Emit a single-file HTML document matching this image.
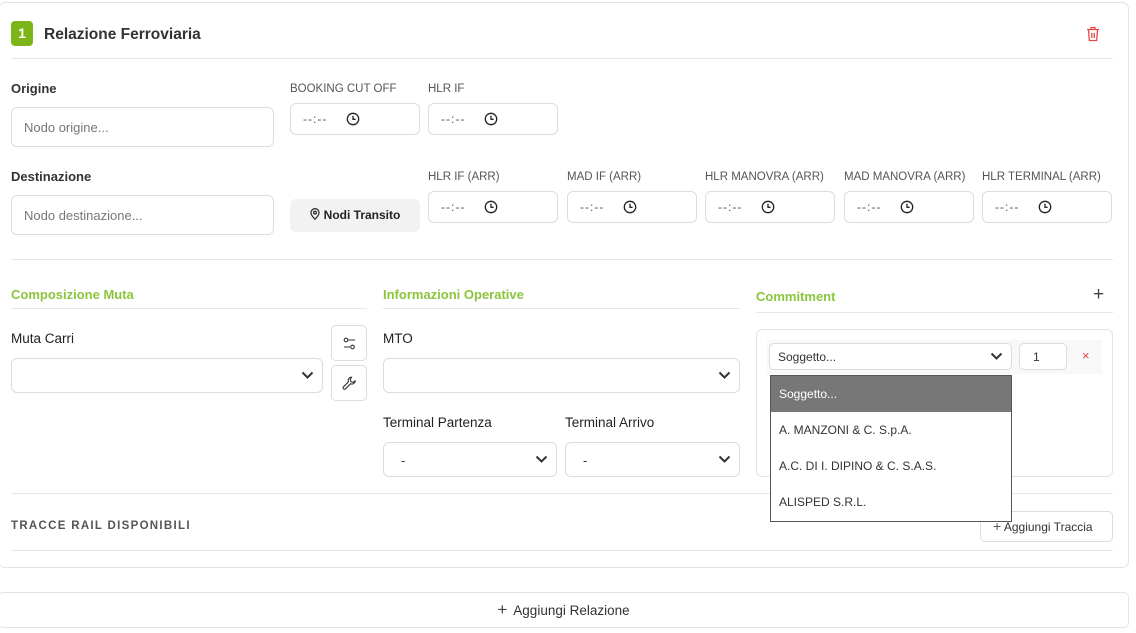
<!DOCTYPE html>
<html><head><meta charset="utf-8"><style>
*{box-sizing:border-box;margin:0;padding:0}
body{width:1136px;height:633px;background:#fff;font-family:"Liberation Sans",sans-serif;color:#333;position:relative;overflow:hidden}
.a{position:absolute}
.card{left:-2px;top:2px;width:1131px;height:566px;border:1px solid #e3e3e3;border-radius:7px}
.hr{position:absolute;height:1px;background:#e6e6e6}
.lbl{position:absolute;font-size:13px;font-weight:bold;color:#333;line-height:16px}
.sl{position:absolute;font-size:11.5px;color:#555;line-height:14px}
.inp{position:absolute;border:1px solid #dcdcdc;border-radius:6px;background:#fff}
.ph{position:absolute;left:12px;font-size:13px;color:#777}
.time .t{position:absolute;left:12px;top:8px;font-size:12px;color:#555;letter-spacing:1px}
.time svg{position:absolute;left:55px;top:8px}
.green{position:absolute;font-size:13px;font-weight:bold;color:#8cc43c;line-height:16px}
.chev{position:absolute;right:8px;top:50%;margin-top:-5px}
.ib{position:absolute;border:1px solid #dcdcdc;border-radius:5px;background:#fff}
</style></head><body>
<div class="a card"></div>
<div class="a" style="left:11px;top:21px;width:22px;height:25px;background:#7cb518;border-radius:4px;color:#fff;font-weight:bold;font-size:14px;text-align:center;line-height:25px">1</div>
<div class="a" style="left:44px;top:26px;font-size:15.5px;font-weight:bold;color:#333">Relazione Ferroviaria</div>
<svg class="a" style="left:1086px;top:26px" width="14" height="16" viewBox="0 0 14 16" fill="none" stroke="#e04848" stroke-width="1.3"><path d="M1 3.5h12M5 3.5V1.5h4v2M2.5 3.5l.8 11h7.4l.8-11M5.8 7v5M8.2 7v5"/></svg>
<div class="hr" style="left:11px;top:58px;width:1102px"></div>

<div class="lbl" style="left:11px;top:81px">Origine</div>
<div class="inp" style="left:11px;top:107px;width:263px;height:40px"><span class="ph" style="top:12px">Nodo origine...</span></div>
<div class="sl" style="left:290px;top:82px">BOOKING CUT OFF</div>
<div class="sl" style="left:428px;top:82px">HLR IF</div>

<div class="lbl" style="left:11px;top:169px">Destinazione</div>
<div class="inp" style="left:11px;top:195px;width:263px;height:40px"><span class="ph" style="top:12px">Nodo destinazione...</span></div>
<div class="a" style="left:290px;top:199px;width:130px;height:33px;background:#f2f2f2;border-radius:6px;font-size:12px;font-weight:bold;color:#222;text-align:center;line-height:33px"><svg width="10" height="12" viewBox="0 0 10 12" style="vertical-align:-1px;margin-right:4px" fill="none" stroke="#222" stroke-width="1.2"><path d="M5 11.2S1 7.2 1 4.6a4 4 0 0 1 8 0C9 7.2 5 11.2 5 11.2z"/><circle cx="5" cy="4.6" r="1.4"/></svg>Nodi Transito</div>

<div class="sl" style="left:428px;top:170px">HLR IF (ARR)</div>
<div class="sl" style="left:567px;top:170px">MAD IF (ARR)</div>
<div class="sl" style="left:705px;top:170px">HLR MANOVRA (ARR)</div>
<div class="sl" style="left:844px;top:170px">MAD MANOVRA (ARR)</div>
<div class="sl" style="left:982px;top:170px">HLR TERMINAL (ARR)</div>

<div id="times"></div>

<div class="hr" style="left:11px;top:259px;width:1102px"></div>

<div class="green" style="left:11px;top:287px">Composizione Muta</div>
<div class="hr" style="left:11px;top:308px;width:356px"></div>
<div class="green" style="left:383px;top:287px">Informazioni Operative</div>
<div class="hr" style="left:383px;top:308px;width:356px"></div>
<div class="green" style="left:756px;top:289px">Commitment</div>
<div class="a" style="left:1093px;top:284px;font-size:19px;color:#444">+</div>
<div class="hr" style="left:756px;top:312px;width:357px"></div>

<div class="lbl" style="left:11px;top:331px;font-weight:normal;font-size:13.5px;color:#222">Muta Carri</div>
<div class="inp" style="left:11px;top:358px;width:312px;height:35px"><svg class="chev" width="13" height="9" viewBox="0 0 13 9" fill="none" stroke="#333" stroke-width="2"><path d="M1.5 1.5l5 5 5-5"/></svg></div>
<div class="ib" style="left:331px;top:325px;width:36px;height:36px"><svg style="position:absolute;left:11px;top:11px" width="13" height="13" viewBox="0 0 13 13" fill="none" stroke="#333" stroke-width="1.1"><circle cx="3" cy="3" r="1.8"/><path d="M5 3h7M1 10h6"/><circle cx="9.5" cy="10" r="1.8"/></svg></div>
<div class="ib" style="left:331px;top:365px;width:36px;height:36px"><svg style="position:absolute;left:10px;top:10px" width="15" height="15" viewBox="0 0 15 15" fill="none" stroke="#333" stroke-width="1.1"><path d="M9.5 1.2a3.3 3.3 0 0 0-3 4.6L1.5 10.8a1.4 1.4 0 0 0 2 2l5-5a3.3 3.3 0 0 0 4.6-3l-2 1.5-2.2-.6-.6-2.2z"/></svg></div>

<div class="lbl" style="left:383px;top:331px;font-weight:normal;font-size:13.5px;color:#222">MTO</div>
<div class="inp" style="left:383px;top:358px;width:357px;height:35px"><svg class="chev" width="13" height="9" viewBox="0 0 13 9" fill="none" stroke="#333" stroke-width="2"><path d="M1.5 1.5l5 5 5-5"/></svg></div>
<div class="lbl" style="left:383px;top:415px;font-weight:normal;font-size:13.5px;color:#222">Terminal Partenza</div>
<div class="inp" style="left:383px;top:442px;width:174px;height:35px"><span class="ph" style="left:17px;top:10px;color:#333">-</span><svg class="chev" width="13" height="9" viewBox="0 0 13 9" fill="none" stroke="#333" stroke-width="2"><path d="M1.5 1.5l5 5 5-5"/></svg></div>
<div class="lbl" style="left:565px;top:415px;font-weight:normal;font-size:13.5px;color:#222">Terminal Arrivo</div>
<div class="inp" style="left:565px;top:442px;width:175px;height:35px"><span class="ph" style="left:17px;top:10px;color:#333">-</span><svg class="chev" width="13" height="9" viewBox="0 0 13 9" fill="none" stroke="#333" stroke-width="2"><path d="M1.5 1.5l5 5 5-5"/></svg></div>

<div class="inp" style="left:756px;top:329px;width:357px;height:148px;border-color:#e3e3e3"></div>
<div class="a" style="left:767px;top:340px;width:335px;height:34px;background:#f8f8f8"></div>
<div class="inp" style="left:769px;top:343px;width:243px;height:27px;border-radius:5px"><span class="ph" style="left:8px;top:6px;font-size:12px;color:#333">Soggetto...</span><svg class="chev" width="13" height="9" viewBox="0 0 13 9" fill="none" stroke="#333" stroke-width="2"><path d="M1.5 1.5l5 5 5-5"/></svg></div>
<div class="inp" style="left:1019px;top:343px;width:48px;height:27px;border-radius:5px"><span class="ph" style="left:13px;top:6px;font-size:12px;color:#333">1</span></div>
<div class="a" style="left:1082px;top:348px;font-size:13px;color:#e04848">×</div>

<div class="hr" style="left:11px;top:493px;width:1102px"></div>
<div class="a" style="left:11px;top:520px;font-size:11.5px;font-weight:bold;color:#555;letter-spacing:1.3px">TRACCE RAIL DISPONIBILI</div>
<div class="inp" style="left:980px;top:511px;width:133px;height:31px;border-radius:5px;font-size:12px;color:#333;line-height:29px;padding-left:12px"><span style="font-size:14px;color:#555">+</span> Aggiungi Traccia</div>
<div class="hr" style="left:11px;top:550px;width:1102px"></div>

<div class="a" style="left:770px;top:375px;width:242px;height:147px;border:1px solid #555;background:#fff;font-size:12px;color:#333">
<div style="height:36px;background:#777;color:#fff;line-height:37px;padding-left:8px">Soggetto...</div>
<div style="height:36px;line-height:37px;padding-left:8px">A. MANZONI &amp; C. S.p.A.</div>
<div style="height:36px;line-height:37px;padding-left:8px">A.C. DI I. DIPINO &amp; C. S.A.S.</div>
<div style="height:36px;line-height:37px;padding-left:8px">ALISPED S.R.L.</div>
</div>

<div class="a" style="left:-2px;top:592px;width:1131px;height:36px;border:1px solid #e3e3e3;border-radius:5px;text-align:center;line-height:34px;font-size:13.5px;color:#333"><span style="font-size:17px;color:#444;margin-right:6px">+</span>Aggiungi Relazione</div>

<script>
var T=[[290,103],[428,103],[428,191],[567,191],[705,191],[844,191],[982,191]],h='';
T.forEach(function(p){h+='<div class="inp time" style="left:'+p[0]+'px;top:'+p[1]+'px;width:130px;height:32px"><span class="t">--:--</span><svg width="14" height="14" viewBox="0 0 14 14" fill="none" stroke="#222" stroke-width="1.3"><circle cx="7" cy="7" r="5.7"/><path d="M7 3.8V7.3h2.6"/></svg></div>'});
document.getElementById('times').innerHTML=h;
</script>
</body></html>
